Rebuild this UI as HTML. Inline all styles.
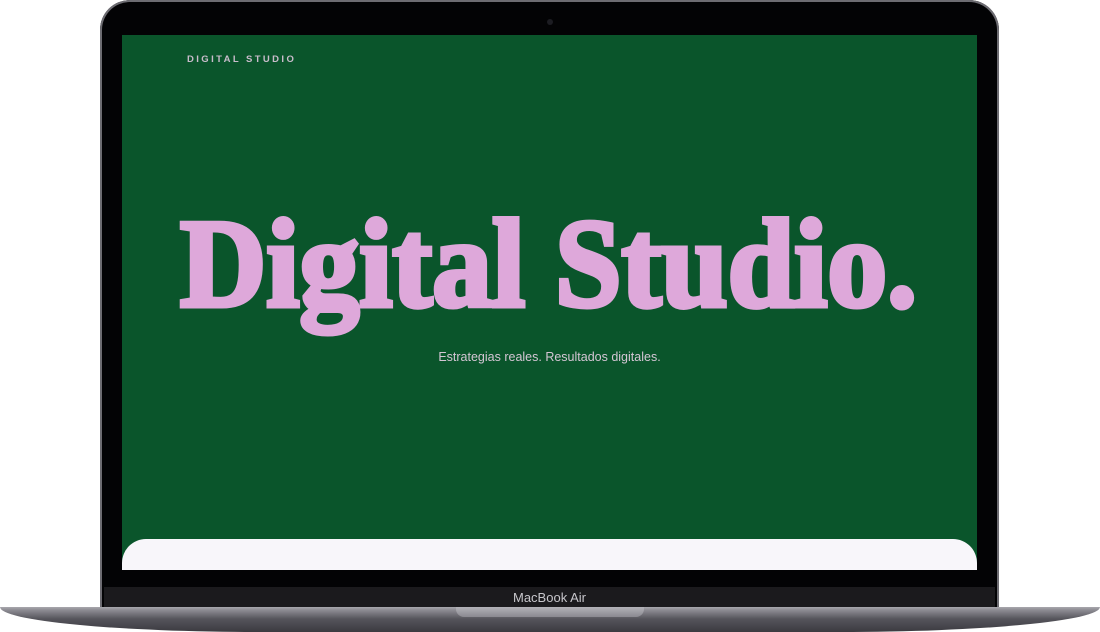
<!DOCTYPE html>
<html><head><meta charset="utf-8"><style>
html,body{margin:0;padding:0;background:#fff;}
body{width:1100px;height:632px;position:relative;overflow:hidden;font-family:"Liberation Sans",sans-serif;}
.lid{position:absolute;left:100px;top:0;width:899px;height:610px;background:#030305;border-radius:30px 30px 0 0;box-shadow:inset 0 0 0 2px #6d6c72;}
.cam{position:absolute;left:547px;top:19px;width:6px;height:6px;border-radius:50%;background:#1c1c22;}
.screen{position:absolute;left:122px;top:35px;width:855px;height:535px;background:#0a552b;overflow:hidden;}
.brand{position:absolute;left:65px;top:19px;font-size:9.5px;letter-spacing:2.4px;color:#c9bccb;font-weight:bold;}
.sub{position:absolute;left:0;width:855px;top:315px;text-align:center;font-size:12.5px;color:#d4c6d4;}
.card{position:absolute;left:0;top:504px;width:855px;height:40px;background:#f8f6fa;border-radius:24px 24px 0 0;}
.chin{position:absolute;left:104px;top:587px;width:891px;height:20px;background:#1b1a1d;color:#c7c6cb;font-size:13px;text-align:center;line-height:21px;}
.base{position:absolute;left:0;top:607px;width:1100px;height:25px;background:linear-gradient(#a9a8ae 0,#8d8c93 3px,#55545b 12px,#3b3a40 25px);border-radius:0 0 260px 260px/0 0 25px 25px;}
.notch{position:absolute;left:456px;top:607px;width:188px;height:10px;background:linear-gradient(#b3b2b8,#8a8990);border-radius:0 0 8px 8px;}
</style></head><body>
<div class="lid"></div>
<div class="cam"></div>
<div class="screen">
  <div class="brand">DIGITAL STUDIO</div>
  <svg width="855" height="535" style="position:absolute;left:0;top:0">
    <text x="58" y="271" font-family="Liberation Serif" font-weight="bold" font-size="126" fill="#dea8da" stroke="#dea8da" stroke-width="5" textLength="737" lengthAdjust="spacingAndGlyphs">Digital Studio.</text>
  </svg>
  <div class="sub">Estrategias reales. Resultados digitales.</div>
  <div class="card"></div>
</div>
<div class="chin">MacBook Air</div>
<div class="base"></div>
<div class="notch"></div>
</body></html>
